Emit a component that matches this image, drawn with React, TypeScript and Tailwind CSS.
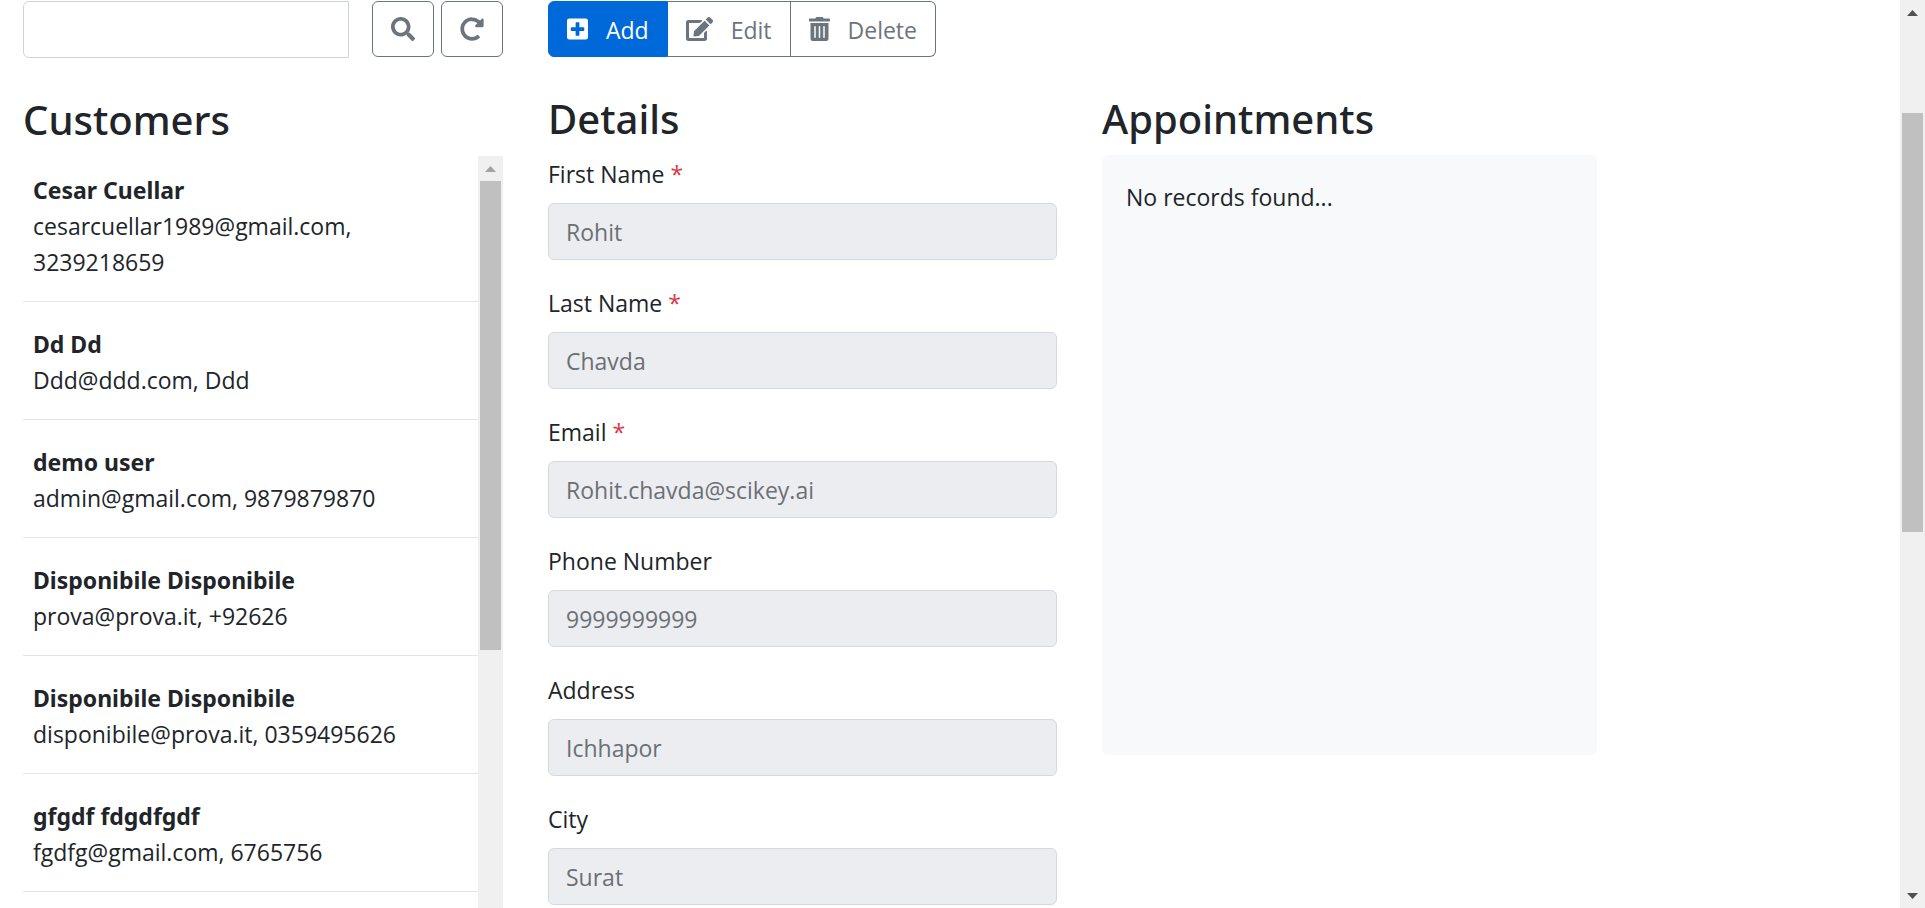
import type { ReactNode } from "react";
import { FaEdit, FaPlusSquare, FaRedoAlt, FaSearch, FaTrashAlt } from "react-icons/fa";

interface Customer {
  name: string;
  contact: string;
}

interface Field {
  id: string;
  label: string;
  value: string;
  required?: boolean;
}

const customers: Customer[] = [
  { name: "Cesar Cuellar", contact: "cesarcuellar1989@gmail.com, 3239218659" },
  { name: "Dd Dd", contact: "Ddd@ddd.com, Ddd" },
  { name: "demo user", contact: "admin@gmail.com, 9879879870" },
  { name: "Disponibile Disponibile", contact: "prova@prova.it, +92626" },
  { name: "Disponibile Disponibile", contact: "disponibile@prova.it, 0359495626" },
  { name: "gfgdf fdgdfgdf", contact: "fgdfg@gmail.com, 6765756" },
];

const fields: Field[] = [
  { id: "first-name", label: "First Name", value: "Rohit", required: true },
  { id: "last-name", label: "Last Name", value: "Chavda", required: true },
  { id: "email", label: "Email", value: "Rohit.chavda@scikey.ai", required: true },
  { id: "phone-number", label: "Phone Number", value: "9999999999" },
  { id: "address", label: "Address", value: "Ichhapor" },
  { id: "city", label: "City", value: "Surat" },
];

function Heading({ children }: { children: ReactNode }) {
  return (
    <h3 className="mb-2.5 font-['Noto_Sans',sans-serif] text-[40px] leading-[52px] font-medium">{children}</h3>
  );
}

function Arrow({ down = false }: { down?: boolean }) {
  return (
    <svg viewBox="0 0 11 6" className="h-1.5 w-[11px] fill-current" aria-hidden="true">
      <path d={down ? "M0 0h11L5.500 6z" : "M0 6h11L5.500 0z"} />
    </svg>
  );
}

function CustomerRow({ customer }: { customer: Customer }) {
  return (
    <li className="border-b border-[#e5e5e5] px-2.5 pt-6 pb-[21px] first:pt-4">
      <strong className="block font-['Noto_Sans',sans-serif] font-bold">{customer.name}</strong>
      <span className="block">{customer.contact}</span>
    </li>
  );
}

function DetailField({ field }: { field: Field }) {
  return (
    <div className="mb-6">
      <label htmlFor={field.id} className="mb-2.5 block leading-[38px]">
        {field.label}
        {field.required && <span className="text-[#dc3545]"> *</span>}
      </label>
      <input
        id={field.id}
        type="text"
        disabled
        defaultValue={field.value}
        className="block h-[57px] w-full rounded-md border border-[#d5d9de] bg-[#ebedf1] px-[17px] text-[#6b7075]"
      />
    </div>
  );
}

const iconButton =
  "flex h-14 w-[62px] items-center justify-center rounded-md border border-[#6c757d] text-[#6c757d]";
const groupButton = "flex h-14 items-center gap-[18px] border border-[#6c757d] px-[18px] text-[#6c757d]";

export default function App() {
  return (
    <div className="flex h-screen overflow-hidden bg-white font-['Open_Sans',sans-serif] text-[23px] leading-9 text-[#212529]">
      <main className="grid min-w-0 flex-1 grid-cols-[480fr_509fr_495fr_258fr] gap-x-[45px] pt-px pl-[23px]">
        <section className="flex h-[calc(100vh-1px)] min-w-0 flex-col">
          <form className="mb-9 flex" onSubmit={(e) => e.preventDefault()}>
            <input
              type="text"
              aria-label="Search customers"
              className="mr-[23px] h-[57px] min-w-0 flex-1 rounded-l-md border border-[#ced4da] px-[18px]"
            />
            <button type="submit" aria-label="Search" className={`${iconButton} mr-[7px]`}>
              <FaSearch className="size-6" />
            </button>
            <button type="button" aria-label="Clear" className={iconButton}>
              <FaRedoAlt className="size-6" />
            </button>
          </form>
          <Heading>Customers</Heading>
          <div className="flex min-h-0 flex-1">
            <ul className="min-w-0 flex-1 overflow-hidden">
              {customers.map((customer) => (
                <CustomerRow key={customer.contact} customer={customer} />
              ))}
            </ul>
            <div className="flex w-[25px] flex-col bg-[#f0f0f0] px-0.5" aria-hidden="true">
              <div className="flex h-[25px] shrink-0 items-center justify-center text-[#a3a3a3]">
                <Arrow />
              </div>
              <div className="h-[469px] bg-[#c0c0c0]" />
            </div>
          </div>
        </section>

        <section className="min-w-0">
          <div className="mb-9 flex" role="group" aria-label="Customer actions">
            <button
              type="button"
              className="flex h-14 items-center gap-[18px] rounded-l-md border border-[#0069d9] bg-[#0069d9] px-[18px] text-white"
            >
              <FaPlusSquare className="h-6 w-[21px]" />
              <span className="pt-0.5">Add</span>
            </button>
            <button type="button" className={`${groupButton} border-l-0`}>
              <FaEdit className="h-6 w-[27px]" />
              <span className="pt-0.5">Edit</span>
            </button>
            <button type="button" className={`${groupButton} rounded-r-md border-l-0`}>
              <FaTrashAlt className="h-6 w-[21px]" />
              <span className="pt-0.5">Delete</span>
            </button>
          </div>
          <Heading>Details</Heading>
          {fields.map((field) => (
            <DetailField key={field.id} field={field} />
          ))}
        </section>

        <section className="min-w-0 pt-[92px]">
          <Heading>Appointments</Heading>
          <div className="min-h-[600px] rounded-md bg-[#f8f9fb] px-6 py-6">No records found...</div>
        </section>
      </main>

      <div className="flex w-[25px] shrink-0 flex-col justify-between bg-[#f0f0f0] px-0.5" aria-hidden="true">
        <div className="flex h-[25px] items-center justify-center text-[#505050]">
          <Arrow />
        </div>
        <div className="flex-1 pt-[88px]">
          <div className="h-[419px] bg-[#c0c0c0]" />
        </div>
        <div className="flex h-[25px] items-center justify-center text-[#505050]">
          <Arrow down />
        </div>
      </div>
    </div>
  );
}
